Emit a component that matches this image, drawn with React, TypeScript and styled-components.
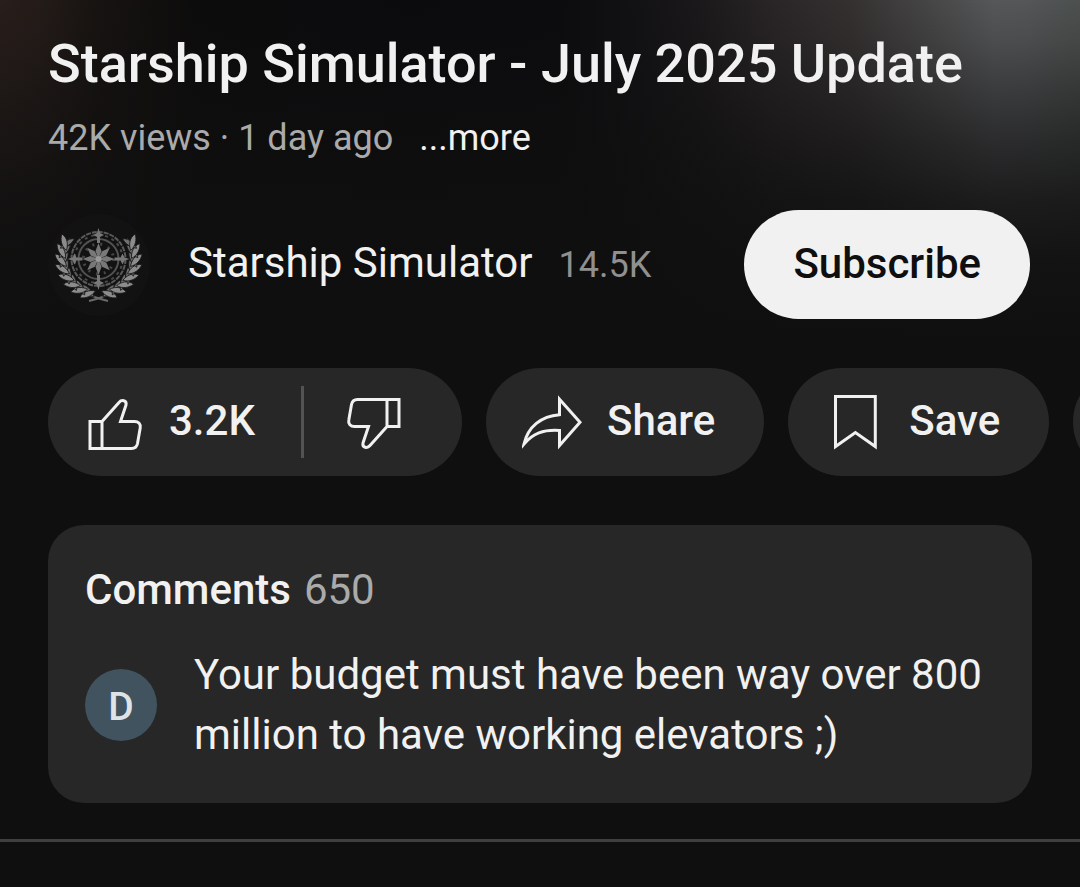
import React from "react";
import styled, { createGlobalStyle } from "styled-components";

const GlobalStyle = createGlobalStyle`
  * { box-sizing: border-box; }
  body {
    margin: 0;
    background: #0f0f0f;
    color: #f1f1f1;
    font-family: Roboto, "Liberation Sans", sans-serif;
  }
  button { font-family: inherit; cursor: pointer; border: 0; }
`;

const Page = styled.main`
  min-height: 100vh;
  overflow: hidden;
  background:
    linear-gradient(
      to bottom,
      rgba(15, 15, 15, 0) 0,
      rgba(15, 15, 15, 0.14) 40px,
      rgba(15, 15, 15, 0.38) 90px,
      rgba(15, 15, 15, 0.6) 140px,
      rgba(15, 15, 15, 0.82) 200px,
      rgba(15, 15, 15, 0.94) 260px,
      #0f0f0f 340px
    ),
    linear-gradient(
      to right,
      #281e1b 0%,
      #231b18 4%,
      #171311 9%,
      #0d0c0c 18%,
      #0b0b0e 38%,
      #0c0c0e 52%,
      #121114 59%,
      #1b191a 65%,
      #2a2627 72%,
      #353131 79%,
      #444343 85%,
      #555759 92%,
      #545658 95%,
      #4c504e 100%
    );
`;

const Header = styled.header`
  padding: 32px 48px 0;
`;

const Title = styled.h1`
  margin: 0;
  font-size: 54px;
  line-height: 64px;
  font-weight: 500;
`;

const Meta = styled.div`
  display: flex;
  gap: 26px;
  margin-top: 21px;
  font-size: 36px;
  line-height: 42px;
  color: #aaa;
`;

const MoreButton = styled.button`
  padding: 0;
  background: none;
  color: #f1f1f1;
  font-size: 36px;
  line-height: 42px;
`;

const ChannelRow = styled.section`
  display: flex;
  align-items: center;
  justify-content: space-between;
  margin-top: 51px;
  padding: 0 50px 0 48px;
`;

const ChannelLink = styled.a`
  display: flex;
  align-items: center;
  gap: 36px;
  color: #f1f1f1;
  text-decoration: none;
`;

const ChannelText = styled.span`
  display: flex;
  align-items: baseline;
  gap: 26px;
  padding-bottom: 2px;
  font-size: 42px;
  line-height: 48px;
`;

const Subscribers = styled.span`
  font-size: 36px;
  color: #909090;
`;

const SubscribeButton = styled.button`
  height: 109px;
  padding: 0 49px 2px;
  border-radius: 55px;
  background: #f1f1f1;
  color: #0f0f0f;
  font-size: 42px;
  line-height: 48px;
  font-weight: 500;
`;

const Actions = styled.section`
  display: flex;
  gap: 24px;
  margin-top: 49px;
  padding-left: 48px;
  overflow: hidden;
`;

const LikeGroup = styled.div`
  display: flex;
  flex: none;
  align-items: center;
  height: 108px;
  border-radius: 54px;
  background: #272727;
`;

const Divider = styled.span`
  width: 3px;
  height: 72px;
  background: #535353;
`;

const Action = styled.button<{ $pad?: string; $flat?: boolean }>`
  display: flex;
  flex: none;
  align-items: center;
  gap: 25px;
  height: 108px;
  padding: ${(p) => p.$pad ?? "0 49px 2px 36px"};
  border-radius: 54px;
  background: ${(p) => (p.$flat ? "none" : "#272727")};
  color: #f1f1f1;
  font-size: 42px;
  line-height: 48px;
  font-weight: 500;
`;

const OverflowAction = styled(Action)`
  width: 240px;
`;

const Icon = styled.svg`
  flex: none;
  width: 60px;
  height: 60px;
  fill: none;
  stroke: #f1f1f1;
  stroke-width: 3;
`;

const CommentsCard = styled.section`
  margin: 49px 48px 36px;
  padding: 41px 36px 38px 37px;
  border-radius: 36px;
  background: #272727;
`;

const CommentsTitle = styled.h2`
  display: flex;
  gap: 13px;
  margin: 0;
  font-size: 42px;
  line-height: 48px;
  font-weight: 500;
`;

const CommentsCount = styled.span`
  font-weight: 400;
  color: #aaa;
`;

const Comment = styled.div`
  display: flex;
  align-items: center;
  gap: 37px;
  margin-top: 31px;
`;

const Initial = styled.span`
  display: flex;
  flex: none;
  align-items: center;
  justify-content: center;
  width: 72px;
  height: 72px;
  padding-top: 4px;
  border-radius: 50%;
  background: #41535e;
  color: #dde3e6;
  font-size: 39px;
  line-height: 48px;
  font-weight: 500;
`;

const CommentText = styled.p`
  margin: 0;
  font-size: 42px;
  line-height: 60px;
`;

const Separator = styled.hr`
  height: 3px;
  margin: 0;
  border: 0;
  background: #3f3f3f;
`;

const EmblemSvg = styled.svg`
  flex: none;
  width: 104px;
  height: 104px;
`;

const leafAngles = [76, 62, 48, 34, 20, 6, -8, -22];

function Laurel() {
  return (
    <g>
      <path d="M22 26C6 48 17 78 60 88" stroke="#6a6a6a" strokeWidth="2" fill="none" />
      {leafAngles.map((a) => {
        const t = ((180 - a) * Math.PI) / 180;
        const x = 50.5 + 36 * Math.cos(t);
        const y = 45 + 36 * Math.sin(t);
        return (
          <g key={a} transform={`translate(${x} ${y}) rotate(${-a})`} stroke="#161616" strokeWidth="0.8">
            <path transform="rotate(30)" d="M0 6C-3 1-3-6 1-11C4-6 3 1 0 6Z" fill="#707070" />
            <path transform="rotate(-34)" d="M0 6C-4 1-4-6-1-11C4-6 3 1 0 6Z" fill="#8c8c8c" />
          </g>
        );
      })}
    </g>
  );
}

function Emblem() {
  return (
    <EmblemSvg viewBox="0 0 104 104" aria-hidden="true">
      <circle cx="51" cy="52" r="51" fill="#121212" />
      <g fill="none" stroke="#5a5a5a">
        <circle cx="50.5" cy="46" r="27" strokeWidth="2" strokeDasharray="5 1" />
        <circle cx="50.5" cy="46" r="24" strokeWidth="2" strokeDasharray="3 4" stroke="#4a4a4a" />
        <circle cx="50.5" cy="46" r="20" strokeWidth="2" stroke="#525252" />
        <circle cx="50.5" cy="46" r="15" strokeWidth="3" strokeDasharray="2 6" stroke="#454545" />
      </g>
      <Laurel />
      <g transform="translate(101 0) scale(-1 1)">
        <Laurel />
      </g>
      <g fill="#787878">
        {[0, 90, 180, 270].map((a) => (
          <path key={a} transform={`rotate(${a} 50.5 46)`} d="M50.5 15L52 20L56 22L52 24V30H49V24L45 22L49 20Z" />
        ))}
        {[0, 45, 90, 135, 180, 225, 270, 315].map((a) => (
          <path key={a} transform={`rotate(${a} 50.5 46)`} d="M50.5 46L47.500 38L50.500 30L53.500 38Z" />
        ))}
      </g>
      <circle cx="50.5" cy="46" r="3" fill="#999" />
    </EmblemSvg>
  );
}

const thumbPath =
  "M5 27.5H17V54.5H5ZM17 27.5L34 8.5C36.500 5.500 42 6 41 11L35.500 27.500H49.500C53.500 27.500 56 30 55.200 34L52.500 49.500Q51.500 54.500 46.500 54.500H17";

function Thumb({ down }: { down?: boolean }) {
  return (
    <Icon viewBox="-1 -3 60 60" aria-hidden="true">
      <path d={thumbPath} transform={down ? "rotate(180 29.5 30)" : undefined} />
    </Icon>
  );
}

export default function App() {
  return (
    <>
      <GlobalStyle />
      <Page>
        <Header>
          <Title>Starship Simulator - July 2025 Update</Title>
          <Meta>
            <span>42K views · 1 day ago</span>
            <MoreButton type="button">...more</MoreButton>
          </Meta>
        </Header>

        <ChannelRow>
          <ChannelLink href="#channel">
            <Emblem />
            <ChannelText>
              Starship Simulator
              <Subscribers>14.5K</Subscribers>
            </ChannelText>
          </ChannelLink>
          <SubscribeButton type="button">Subscribe</SubscribeButton>
        </ChannelRow>

        <Actions>
          <LikeGroup>
            <Action type="button" $flat $pad="0 46px 2px 36px">
              <Thumb />
              3.2K
            </Action>
            <Divider />
            <Action type="button" $flat $pad="0 58px 2px 40px" aria-label="Dislike">
              <Thumb down />
            </Action>
          </LikeGroup>
          <Action type="button">
            <Icon viewBox="1 -3 60 60" aria-hidden="true">
              <path d="M38.500 5.200L59 28.300L38.500 51.500V36.500C22 35.500 12 39.500 3 50C7 33 20 22 38.500 20.700Z" strokeMiterlimit="6" />
            </Icon>
            Share
          </Action>
          <Action type="button">
            <Icon viewBox="0 -3 60 60" aria-hidden="true">
              <path d="M11.500 2.500H51.300V52.500L31.400 38.500L11.500 52.500Z" />
            </Icon>
            Save
          </Action>
          <OverflowAction type="button" aria-label="More actions" />
        </Actions>

        <CommentsCard>
          <CommentsTitle>
            Comments
            <CommentsCount>650</CommentsCount>
          </CommentsTitle>
          <Comment>
            <Initial>D</Initial>
            <CommentText>Your budget must have been way over 800 million to have working elevators ;)</CommentText>
          </Comment>
        </CommentsCard>
        <Separator />
      </Page>
    </>
  );
}
